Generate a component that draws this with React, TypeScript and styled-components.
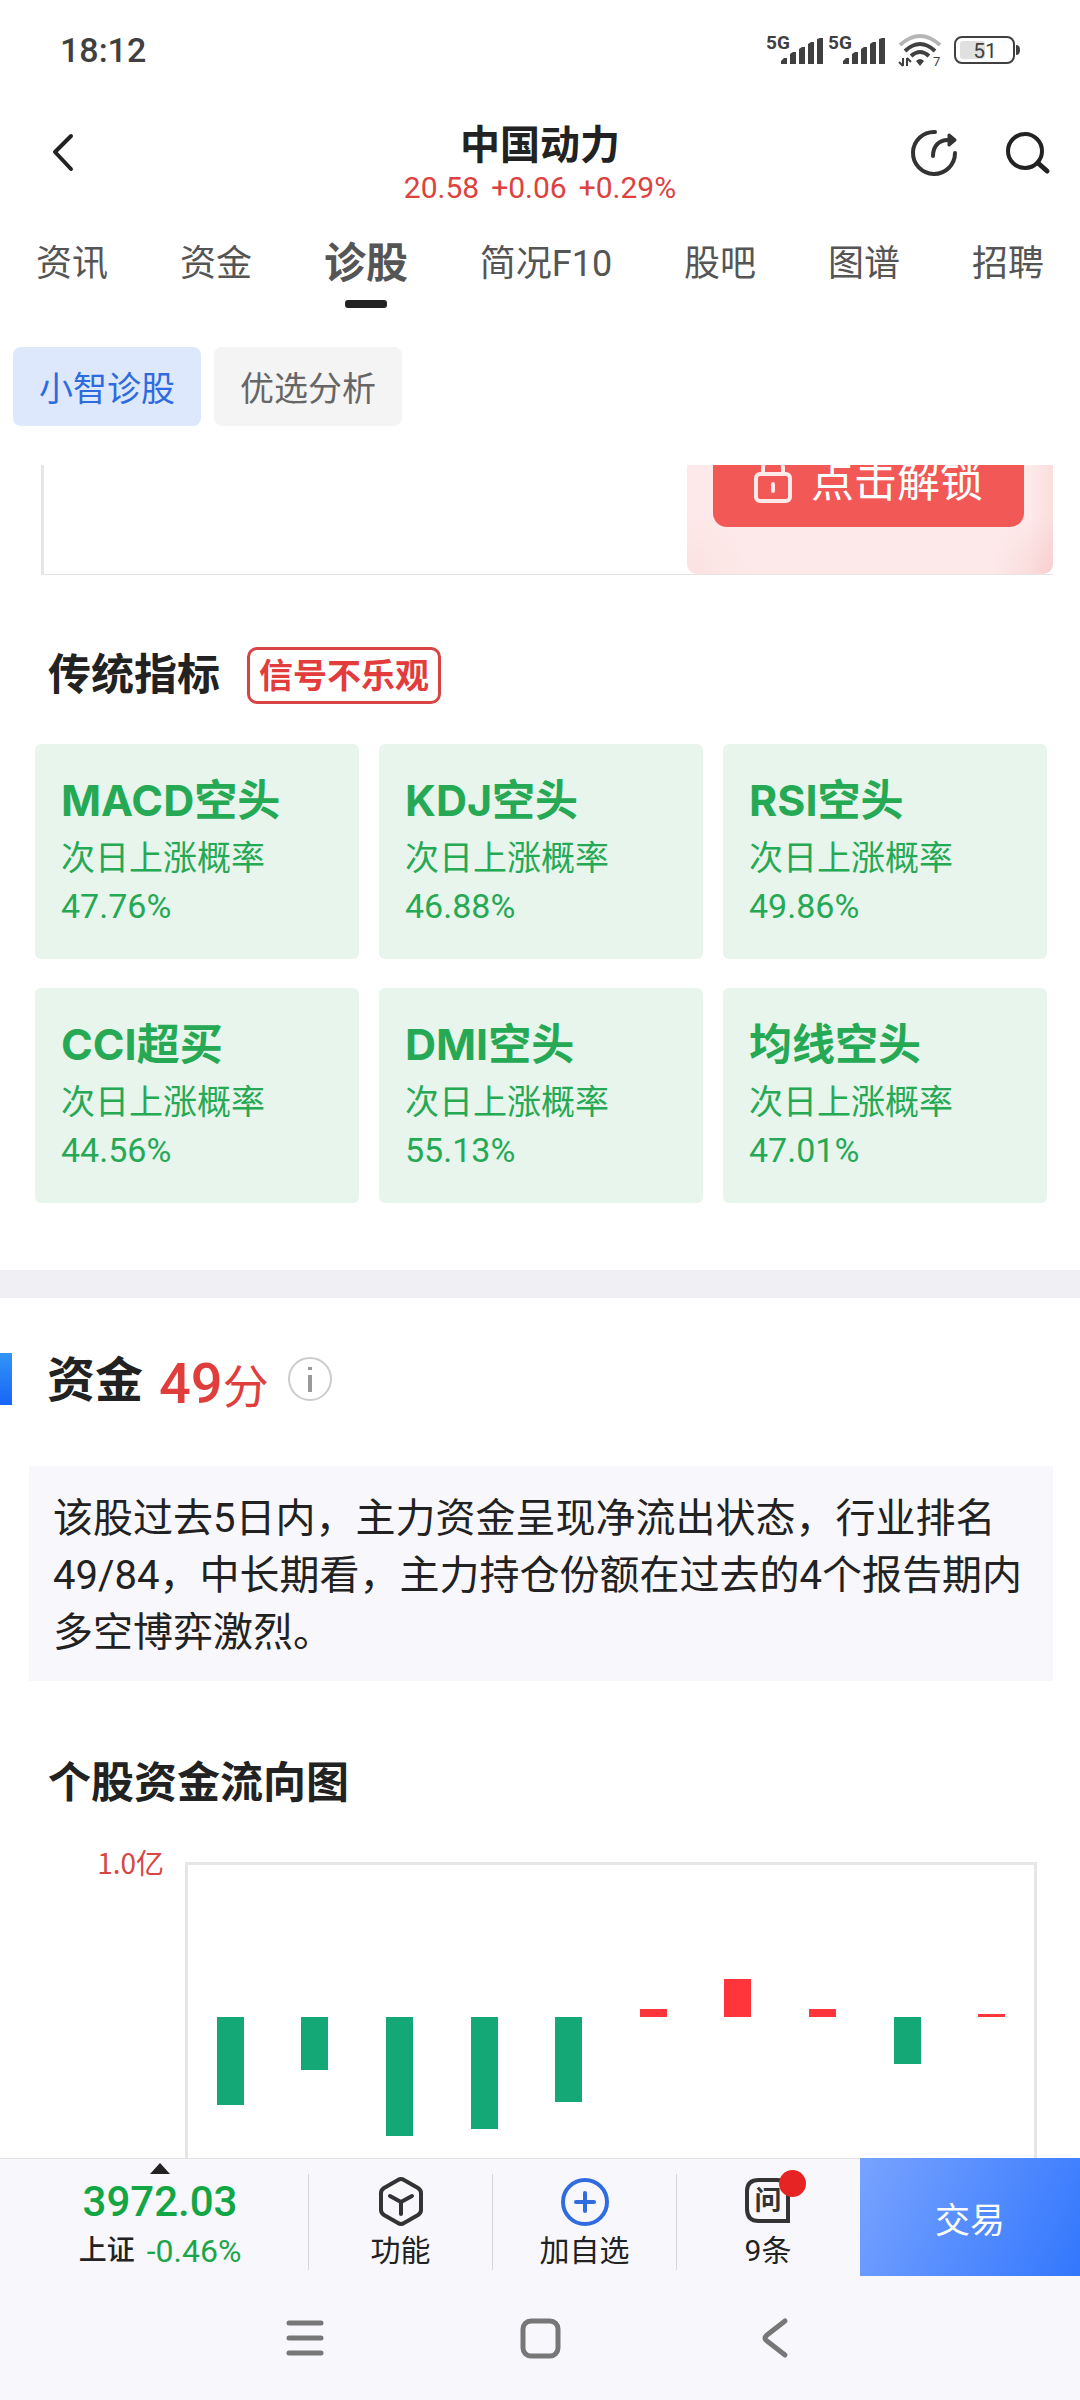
import React from "react";
import styled, { createGlobalStyle } from "styled-components";

const GlobalStyle = createGlobalStyle`
  *, *::before, *::after { box-sizing: border-box; }
  body {
    margin: 0;
    background: #ffffff;
    color: #222222;
    font-family: Roboto, "Noto Sans CJK SC", sans-serif;
  }
  button {
    margin: 0;
    padding: 0;
    border: 0;
    background: none;
    color: inherit;
    font: inherit;
    cursor: pointer;
  }
  h1, h2, h3, p { margin: 0; }
  svg { display: block; overflow: visible; }
`;

const Screen = styled.div`
  display: flex;
  flex-direction: column;
  height: 100vh;
  overflow: hidden;
`;

/* ---------- status bar ---------- */

const StatusBar = styled.div`
  display: flex;
  align-items: center;
  justify-content: space-between;
  height: 100px;
  padding: 0 60px;
  color: #404040;
`;

const Clock = styled.time`
  font-size: 34px;
  line-height: 40px;
  font-weight: 500;
`;

const StatusIcons = styled.div`
  display: flex;
  align-items: center;
  gap: 13px;
`;

const Signals = styled.div`
  display: flex;
  gap: 4px;
`;

/* ---------- title bar ---------- */

const TitleBar = styled.div`
  display: grid;
  grid-template-columns: 1fr auto 1fr;
  align-items: center;
  padding: 0 31px;
`;

const Actions = styled.div`
  display: flex;
  align-items: center;
  justify-content: flex-end;
  gap: 47px;
`;

const IconButton = styled.button`
  display: block;
  justify-self: start;
`;

const BackButton = styled(IconButton)`
  padding-left: 10px;
`;

const StockHead = styled.div`
  padding: 22px 0 0;
  text-align: center;
`;

const StockName = styled.h1`
  font-size: 40px;
  line-height: 48px;
  font-weight: 700;
`;

const Quote = styled.div`
  display: flex;
  justify-content: center;
  gap: 12px;
  font-size: 30px;
  line-height: 36px;
  color: #dc4240;
`;

/* ---------- tabs ---------- */

const Tabs = styled.nav`
  display: flex;
  justify-content: space-between;
  padding: 30px 36px 0;
`;

const Tab = styled.button<{ $active?: boolean }>`
  display: flex;
  flex-direction: column;
  align-items: center;
  gap: 8px;
  font-size: ${(p) => (p.$active ? "42px" : "36px")};
  line-height: 56px;
  font-weight: ${(p) => (p.$active ? 700 : 400)};
  color: #555555;
  white-space: nowrap;

  &::after {
    content: "";
    width: 42px;
    height: 8px;
    border-radius: 3px;
    background: ${(p) => (p.$active ? "#222222" : "transparent")};
  }
`;

const Pills = styled.div`
  display: flex;
  gap: 13px;
  padding: 39px 13px;
`;

const Pill = styled.button<{ $active?: boolean }>`
  height: 79px;
  padding: 0 26px;
  border-radius: 8px;
  font-size: 34px;
  color: ${(p) => (p.$active ? "#2f6be0" : "#666666")};
  background: ${(p) => (p.$active ? "#dde8fd" : "#f4f4f4")};
`;

/* ---------- scrolling content ---------- */

const Content = styled.main`
  flex: 1;
  min-height: 0;
  overflow-y: auto;
  scrollbar-width: none;
`;

const LockedTable = styled.div`
  display: flex;
  justify-content: flex-end;
  height: 110px;
  margin: 0 27px 0 41px;
  border-left: 3px solid #e6e6e6;
  border-bottom: 1px solid #e4e4e4;
`;

const LockedCell = styled.div`
  display: flex;
  flex-direction: column;
  justify-content: flex-end;
  width: 366px;
  padding: 0 29px 47px 26px;
  overflow: hidden;
  border-radius: 0 0 10px 10px;
  background:
    radial-gradient(circle at 100% 100%, rgba(243, 178, 178, 0.35), transparent 60px),
    radial-gradient(circle at 0 100%, rgba(243, 178, 178, 0.15), transparent 60px),
    linear-gradient(to left, rgba(243, 178, 178, 0.2), transparent 24px),
    #fde9e9;
`;

const UnlockButton = styled.button`
  display: flex;
  flex: none;
  align-items: center;
  justify-content: center;
  gap: 19px;
  height: 94px;
  padding-bottom: 5px;
  border-radius: 14px;
  background: #f15856;
  color: #ffffff;
  font-size: 43px;
`;

const IndicatorHead = styled.div`
  display: flex;
  align-items: center;
  gap: 27px;
  padding: 72px 48px 40px;
`;

const Heading = styled.h2`
  font-size: 43px;
  line-height: 57px;
  font-weight: 700;
`;

const SignalBadge = styled.span`
  padding: 1px 9px 0;
  border: 3px solid #d84343;
  border-radius: 10px;
  font-size: 34px;
  line-height: 50px;
  font-weight: 700;
  color: #e23c3c;
`;

const Cards = styled.div`
  display: grid;
  grid-template-columns: repeat(3, 1fr);
  gap: 29px 20px;
  padding: 0 33px 0 35px;
`;

const Card = styled.article`
  padding: 28px 26px 29px;
  border-radius: 6px;
  background: #e8f5ec;
  color: #26a954;
  font-size: 34px;
  line-height: 48px;
`;

const CardTitle = styled.h3`
  margin-bottom: 6px;
  font-family: Inter, "Noto Sans CJK SC", sans-serif;
  font-size: 43px;
  line-height: 56px;
  font-weight: 700;
`;

const Divider = styled.div`
  height: 28px;
  margin-top: 67px;
  background: #efeff4;
`;

const FundHead = styled.div`
  display: flex;
  align-items: center;
  margin: 55px 0 61px;
  height: 52px;

  &::before {
    content: "";
    width: 12px;
    height: 52px;
    margin-right: 35px;
    background: linear-gradient(#3294f6, #1765f7);
  }
`;

const FundTitle = styled.h2`
  padding-top: 4px;
  font-size: 48px;
  line-height: 52px;
  font-weight: 700;
`;

const Score = styled.span`
  display: flex;
  align-items: baseline;
  margin: 0 18px 0 16px;
  padding-top: 12px;
  font-size: 46px;
  line-height: 52px;
  color: #e03e3c;
`;

const ScoreNumber = styled.strong`
  font-size: 56px;
  font-weight: 500;
`;

const Summary = styled.p`
  margin: 0 27px 0 29px;
  padding: 24px 24px 20px;
  background: #f7f7fc;
  font-size: 40px;
  line-height: 57px;
`;

const ChartHeading = styled(Heading)`
  padding: 74px 48px 50px;
`;

const Chart = styled.figure`
  display: grid;
  grid-template-columns: 164px 1fr;
  column-gap: 21px;
  margin: 0 43px 40px 0;
`;

const AxisLabel = styled.figcaption`
  height: 0;
  display: flex;
  align-items: center;
  justify-content: flex-end;
  font-family: "Noto Sans CJK SC", sans-serif;
  font-size: 28px;
  color: #d84543;
`;

const Plot = styled.div`
  display: grid;
  grid-template-columns: repeat(10, 1fr);
  border: 3px solid #e6e6e6;
`;

const Column = styled.div`
  display: grid;
  grid-template-rows: 152px 152px;
  justify-items: center;
`;

const Bar = styled.div<{ $up: boolean }>`
  grid-row: ${(p) => (p.$up ? 1 : 2)};
  align-self: ${(p) => (p.$up ? "end" : "start")};
  width: 27px;
  background: ${(p) => (p.$up ? "#ff353b" : "#14a877")};
`;

/* ---------- bottom bar ---------- */

const BottomBar = styled.div`
  display: grid;
  grid-template-columns: 309fr 184fr 184fr 183fr 220fr;
  height: 118px;
  background: #f8f8fc;
`;

const BarCell = styled.button`
  padding: 15px 0 6px;
  border-top: 1px solid #e2e2e4;
  font-size: 30px;
  line-height: 36px;
`;

const CellBody = styled.span<{ $last?: boolean }>`
  position: relative;
  display: flex;
  flex-direction: column;
  align-items: center;
  gap: 5px;
  height: 96px;
  padding-top: 2px;
  border-right: 1px solid ${(p) => (p.$last ? "transparent" : "#d6d6da")};
`;

const IndexBody = styled(CellBody)`
  padding-left: 12px;
`;

const IndexValue = styled.span`
  font-size: 42px;
  line-height: 52px;
  font-weight: 500;
  color: #12a644;
`;

const IndexRow = styled.span`
  display: flex;
  align-items: center;
  gap: 12px;
  font-size: 28px;
  font-weight: 500;
`;

const IndexChange = styled.span`
  font-size: 32px;
  font-weight: 400;
  color: #1ba64a;
`;

const Caret = styled.span`
  position: absolute;
  top: -11px;
  left: 50%;
  margin-left: -4px;
  border: 10px solid transparent;
  border-top: 0;
  border-bottom: 11px solid #222222;
`;

const IconSlot = styled.span`
  position: relative;
  display: block;
`;

const Dot = styled.span`
  position: absolute;
  top: -6px;
  right: -15px;
  width: 27px;
  height: 27px;
  border-radius: 50%;
  background: #e52423;
`;

const TradeButton = styled.button`
  background: linear-gradient(115deg, #78a3ff, #3377fd);
  color: #ffffff;
  font-size: 35px;
`;

const SystemNav = styled.nav`
  display: flex;
  align-items: center;
  justify-content: center;
  gap: 191px;
  height: 124px;
  background: #f8f8fc;
`;

/* ---------- drawings ---------- */

const SignalIcon = () => (
  <svg width="58" height="30" viewBox="0 0 58 30" fill="#404040">
    <text x="0" y="14" fontSize="19" fontWeight="700" fontFamily="Roboto, sans-serif">
      5G
    </text>
    <path d="M15 29v-3l3-3h3v6zM24 29V19l3-2h3v12zM33 29V14l3-2h3v17zM42 29V9l3-2h3v22zM51 29V4l3-1h3v26z" />
  </svg>
);

const WifiIcon = () => (
  <svg width="42" height="32" viewBox="0 0 42 32" fill="none" strokeWidth="4">
    <path d="M1 11Q21 -7 41 11" stroke="#b5b5b5" />
    <path d="M6 17Q21 3 36 17" stroke="#404040" />
    <path d="M12 22Q21 14 30 22" stroke="#404040" />
    <path d="M17 27q4-4 8 0l-4 5z" fill="#404040" />
    <path d="M4 24v8M0 28l4 4M8 32v-8M12 28l-4-4" stroke="#404040" strokeWidth="2" />
    <text x="34" y="32" fontSize="13" fill="#404040" fontFamily="Roboto, sans-serif">
      7
    </text>
  </svg>
);

const BatteryIcon = () => (
  <svg width="66" height="30" viewBox="0 0 66 30">
    <rect x="1" y="2" width="59" height="26" rx="7" fill="none" stroke="#404040" strokeWidth="2" />
    <rect x="6" y="6" width="25" height="18" rx="3" fill="#e0e0e0" />
    <path d="M62 10q4 0 4 5t-4 5z" fill="#404040" />
    <text x="31" y="23" textAnchor="middle" fontSize="21" fill="#404040" fontFamily="Roboto, sans-serif">
      51
    </text>
  </svg>
);

const BackIcon = () => (
  <svg width="44" height="44" viewBox="0 0 44 44" fill="none" stroke="#222" strokeWidth="4" strokeLinecap="round" strokeLinejoin="round">
    <path d="M30 5L14 21L30 38" />
  </svg>
);

const ShareIcon = () => (
  <svg width="48" height="48" viewBox="0 0 48 48" fill="none" stroke="#333" strokeWidth="4" strokeLinecap="round">
    <path d="M25 3A21 21 0 1 0 45 24" />
    <path d="M23 27C23 17 29 11 38 11" />
    <path d="M39 6L45 11L39 16Z" fill="#333" strokeWidth="3" strokeLinejoin="round" />
  </svg>
);

const SearchIcon = () => (
  <svg width="44" height="44" viewBox="0 0 44 44" fill="none" stroke="#222" strokeWidth="4" strokeLinecap="round">
    <circle cx="20" cy="20" r="17" />
    <path d="M33 32L42 40" strokeWidth="5" />
  </svg>
);

const LockIcon = () => (
  <svg width="38" height="48" viewBox="0 0 38 48" fill="none" stroke="#ffe9e9" strokeWidth="4" strokeLinecap="round">
    <rect x="2" y="20" width="34" height="27" rx="4" />
    <path d="M9 19v-5a10 10 0 0 1 20 0v5M19 30v7" />
  </svg>
);

const InfoIcon = () => (
  <svg width="46" height="46" viewBox="0 0 46 46" fill="none">
    <circle cx="23" cy="23" r="21" stroke="#cccccc" strokeWidth="2" />
    <path d="M23 11v3M23 19v17" stroke="#999999" strokeWidth="4" />
  </svg>
);

const CubeIcon = () => (
  <svg width="52" height="52" viewBox="0 0 52 52" fill="none" stroke="#333" strokeWidth="4" strokeLinecap="round" strokeLinejoin="round">
    <path d="M23 4Q26 2 29 4L43 12Q46 14 46 17V34Q46 37 43 39L29 47Q26 49 23 47L9 39Q6 37 6 34V17Q6 14 9 12Z" />
    <path d="M15 20L26 26L37 20M26 26V38" />
  </svg>
);

const AddIcon = () => (
  <svg width="52" height="52" viewBox="0 0 52 52" fill="none" stroke="#306be0" strokeWidth="4" strokeLinecap="round">
    <circle cx="26" cy="26" r="22" />
    <path d="M17 26h18M26 17v18" />
  </svg>
);

const AskIcon = () => (
  <svg width="46" height="52" viewBox="0 0 46 52" fill="none" stroke="#333" strokeWidth="4">
    <path d="M14 4H32Q43 4 43 15V45H14Q2 45 2 33V15Q2 4 14 4Z" />
    <text x="23" y="34" textAnchor="middle" fontSize="27" fontWeight="700" fill="#333" stroke="none" fontFamily="Noto Sans CJK SC, sans-serif">
      问
    </text>
  </svg>
);

const MenuIcon = () => (
  <svg width="44" height="44" viewBox="0 0 44 44" stroke="#777" strokeWidth="5" strokeLinecap="round">
    <path d="M6 7h32M6 22h32M6 37h32" />
  </svg>
);

const HomeIcon = () => (
  <svg width="44" height="44" viewBox="0 0 44 44" fill="none" stroke="#777" strokeWidth="5">
    <rect x="5" y="5" width="35" height="35" rx="8" />
  </svg>
);

const NavBackIcon = () => (
  <svg width="44" height="44" viewBox="0 0 44 44" fill="none" stroke="#777" strokeWidth="5" strokeLinecap="round" strokeLinejoin="round">
    <path d="M32 5L14 19Q10 22 14 25L32 39" />
  </svg>
);

/* ---------- data ---------- */

const tabs = ["资讯", "资金", "诊股", "简况F10", "股吧", "图谱", "招聘"];

const indicators = [
  { name: "MACD空头", rate: "47.76%" },
  { name: "KDJ空头", rate: "46.88%" },
  { name: "RSI空头", rate: "49.86%" },
  { name: "CCI超买", rate: "44.56%" },
  { name: "DMI空头", rate: "55.13%" },
  { name: "均线空头", rate: "47.01%" },
];

// Net inflow per day as a percentage of the axis limit.
const flows = [-58, -35, -78, -74, -56, 5, 25, 5, -31, 2];

export default function App() {
  return (
    <Screen>
      <GlobalStyle />
      <header>
        <StatusBar>
          <Clock>18:12</Clock>
          <StatusIcons>
            <Signals>
              <SignalIcon />
              <SignalIcon />
            </Signals>
            <WifiIcon />
            <BatteryIcon />
          </StatusIcons>
        </StatusBar>
        <TitleBar>
          <BackButton aria-label="返回">
            <BackIcon />
          </BackButton>
          <StockHead>
            <StockName>中国动力</StockName>
            <Quote>
              <span>20.58</span>
              <span>+0.06</span>
              <span>+0.29%</span>
            </Quote>
          </StockHead>
          <Actions>
            <IconButton aria-label="分享">
              <ShareIcon />
            </IconButton>
            <IconButton aria-label="搜索">
              <SearchIcon />
            </IconButton>
          </Actions>
        </TitleBar>
        <Tabs>
          {tabs.map((name) => (
            <Tab key={name} $active={name === "诊股"}>
              {name}
            </Tab>
          ))}
        </Tabs>
        <Pills>
          <Pill $active>小智诊股</Pill>
          <Pill>优选分析</Pill>
        </Pills>
      </header>

      <Content>
        <LockedTable>
          <LockedCell>
            <UnlockButton>
              <LockIcon />
              点击解锁
            </UnlockButton>
          </LockedCell>
        </LockedTable>

        <IndicatorHead>
          <Heading>传统指标</Heading>
          <SignalBadge>信号不乐观</SignalBadge>
        </IndicatorHead>
        <Cards>
          {indicators.map((item) => (
            <Card key={item.name}>
              <CardTitle>{item.name}</CardTitle>
              <p>次日上涨概率</p>
              <p>{item.rate}</p>
            </Card>
          ))}
        </Cards>

        <Divider />

        <FundHead>
          <FundTitle>资金</FundTitle>
          <Score>
            <ScoreNumber>49</ScoreNumber>分
          </Score>
          <IconButton aria-label="说明">
            <InfoIcon />
          </IconButton>
        </FundHead>
        <Summary>
          该股过去5日内，主力资金呈现净流出状态，行业排名49/84，中长期看，主力持仓份额在过去的4个报告期内多空博弈激烈。
        </Summary>

        <ChartHeading>个股资金流向图</ChartHeading>
        <Chart>
          <AxisLabel>1.0亿</AxisLabel>
          <Plot>
            {flows.map((value, i) => (
              <Column key={i}>
                <Bar $up={value > 0} style={{ height: `${Math.abs(value)}%` }} />
              </Column>
            ))}
          </Plot>
        </Chart>
      </Content>

      <footer>
        <BottomBar>
          <BarCell>
            <IndexBody>
              <Caret />
              <IndexValue>3972.03</IndexValue>
              <IndexRow>
                上证<IndexChange>-0.46%</IndexChange>
              </IndexRow>
            </IndexBody>
          </BarCell>
          <BarCell>
            <CellBody>
              <CubeIcon />
              功能
            </CellBody>
          </BarCell>
          <BarCell>
            <CellBody>
              <AddIcon />
              加自选
            </CellBody>
          </BarCell>
          <BarCell>
            <CellBody $last>
              <IconSlot>
                <AskIcon />
                <Dot />
              </IconSlot>
              9条
            </CellBody>
          </BarCell>
          <TradeButton>交易</TradeButton>
        </BottomBar>
        <SystemNav>
          <IconButton aria-label="最近任务">
            <MenuIcon />
          </IconButton>
          <IconButton aria-label="主屏幕">
            <HomeIcon />
          </IconButton>
          <IconButton aria-label="系统返回">
            <NavBackIcon />
          </IconButton>
        </SystemNav>
      </footer>
    </Screen>
  );
}
